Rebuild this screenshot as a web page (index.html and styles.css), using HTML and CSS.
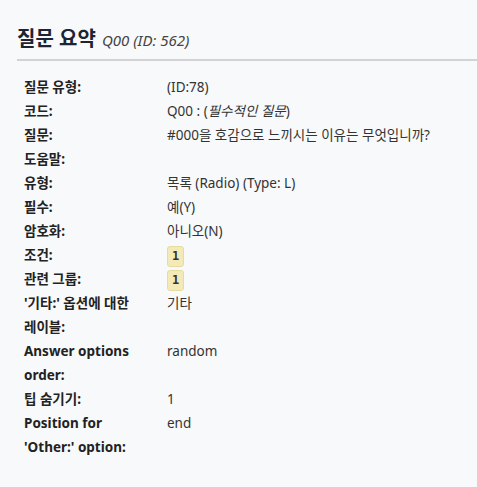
FILE: index.html
```html
<!DOCTYPE html>
<html lang="ko">
<head>
  <meta charset="UTF-8">
  <title>질문 요약</title>
  <link rel="stylesheet" href="styles.css">
</head>
<body>
  <div class="summary">
    <h3 class="summary-title">질문 요약 <small>Q00 (ID: 562)</small></h3>

    <table class="summary-table">
      <tr><th>질문 유형:</th><td>(ID:78)</td></tr>
      <tr><th>코드:</th><td>Q00 : (<em>필수적인 질문</em>)</td></tr>
      <tr><th>질문:</th><td>#000을 호감으로 느끼시는 이유는 무엇입니까?</td></tr>
      <tr><th>도움말:</th><td></td></tr>
      <tr><th>유형:</th><td>목록 (Radio) (Type: L)</td></tr>
      <tr><th>필수:</th><td>예(Y)</td></tr>
      <tr><th>암호화:</th><td>아니오(N)</td></tr>
      <tr><th>조건:</th><td><code class="badge">1</code></td></tr>
      <tr><th>관련 그룹:</th><td><code class="badge">1</code></td></tr>
      <tr><th>'기타:' 옵션에 대한 레이블:</th><td>기타</td></tr>
      <tr><th>Answer options order:</th><td>random</td></tr>
      <tr><th>팁 숨기기:</th><td>1</td></tr>
      <tr><th>Position for 'Other:' option:</th><td>end</td></tr>
    </table>
  </div>
</body>
</html>
```

FILE: styles.css
```css
body {
  margin: 0;
  background-color: #f8f9fa;
  font-family: "Noto Sans", "Noto Sans CJK KR", sans-serif;
  color: #333;
}
.summary {
  padding: 26px 0 0 17px;
}
.summary-title {
  margin: 0;
  padding-bottom: 6px;
  border-bottom: 2px solid #d3d3d6;
  font-size: 20px;
  font-weight: bold;
  color: #1e2432;
  line-height: 26px;
}
.summary-title small {
  margin-left: 1px;
  font-size: 15px;
  font-weight: normal;
  font-style: italic;
  color: #444;
}
.summary-table {
  margin-top: 14px;
  margin-left: 2px;
  border-collapse: collapse;
  font-size: 13.5px;
  line-height: 24px;
  word-break: keep-all;
}
.summary-table th {
  width: 115px;
  padding: 0 28px 0 5px;
  text-align: left;
  vertical-align: top;
  font-weight: bold;
  color: #222;
}
.summary-table td {
  padding: 0;
  vertical-align: top;
  color: #333;
}
.badge {
  display: inline-block;
  padding: 0 4px;
  line-height: 19px;
  border: 1px solid #e6dca0;
  border-radius: 3px;
  background-color: #f3eab8;
  font-family: "DejaVu Sans Mono", monospace;
  font-size: 12px;
  font-weight: bold;
  color: #333;
}
```
